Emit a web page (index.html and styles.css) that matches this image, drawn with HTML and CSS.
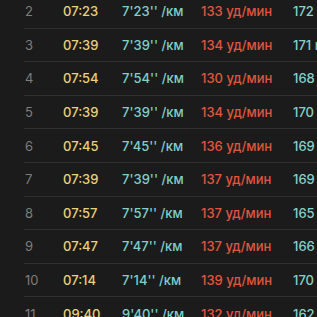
FILE: index.html
```html
<!DOCTYPE html>
<html lang="ru">
<head>
<meta charset="utf-8">
<link rel="stylesheet" href="styles.css">
</head>
<body>
<div class="table">
  <div class="row"><span class="idx">2</span><span class="time">07:23</span><span class="pace">7'23'' /км</span><span class="hr">133 уд/мин</span><span class="cad">172 шаг/мин</span></div>
  <div class="row"><span class="idx">3</span><span class="time">07:39</span><span class="pace">7'39'' /км</span><span class="hr">134 уд/мин</span><span class="cad">171 шаг/мин</span></div>
  <div class="row"><span class="idx">4</span><span class="time">07:54</span><span class="pace">7'54'' /км</span><span class="hr">130 уд/мин</span><span class="cad">168 шаг/мин</span></div>
  <div class="row"><span class="idx">5</span><span class="time">07:39</span><span class="pace">7'39'' /км</span><span class="hr">134 уд/мин</span><span class="cad">170 шаг/мин</span></div>
  <div class="row"><span class="idx">6</span><span class="time">07:45</span><span class="pace">7'45'' /км</span><span class="hr">136 уд/мин</span><span class="cad">169 шаг/мин</span></div>
  <div class="row"><span class="idx">7</span><span class="time">07:39</span><span class="pace">7'39'' /км</span><span class="hr">137 уд/мин</span><span class="cad">169 шаг/мин</span></div>
  <div class="row"><span class="idx">8</span><span class="time">07:57</span><span class="pace">7'57'' /км</span><span class="hr">137 уд/мин</span><span class="cad">165 шаг/мин</span></div>
  <div class="row"><span class="idx">9</span><span class="time">07:47</span><span class="pace">7'47'' /км</span><span class="hr">137 уд/мин</span><span class="cad">166 шаг/мин</span></div>
  <div class="row"><span class="idx">10</span><span class="time">07:14</span><span class="pace">7'14'' /км</span><span class="hr">139 уд/мин</span><span class="cad">170 шаг/мин</span></div>
  <div class="row"><span class="idx">11</span><span class="time">09:40</span><span class="pace">9'40'' /км</span><span class="hr">132 уд/мин</span><span class="cad">162 шаг/мин</span></div>
</div>
</body>
</html>
```
FILE: styles.css
```css
html, body {
  margin: 0;
  padding: 0;
  background: #1b1b1b;
  overflow: hidden;
}
.table {
  margin-top: -5px;
  margin-left: 24px;
  font-family: Inter, "Noto Sans", sans-serif;
  font-size: 13px;
  font-weight: 500;
  overflow: hidden;
}
.row {
  box-sizing: border-box;
  height: 33.6px;
  padding-left: 1px;
  border-bottom: 1px solid #303030;
  display: grid;
  grid-template-columns: 38px 59px 79px 92px 1fr;
  align-items: center;
  white-space: nowrap;
}
.idx { color: #7d7d7d; font-weight: 400; }
.time { color: #e9d07c; }
.pace { color: #7fcfcb; }
.hr { color: #e0563e; }
.cad { color: #86d0ca; overflow: hidden; }
```
